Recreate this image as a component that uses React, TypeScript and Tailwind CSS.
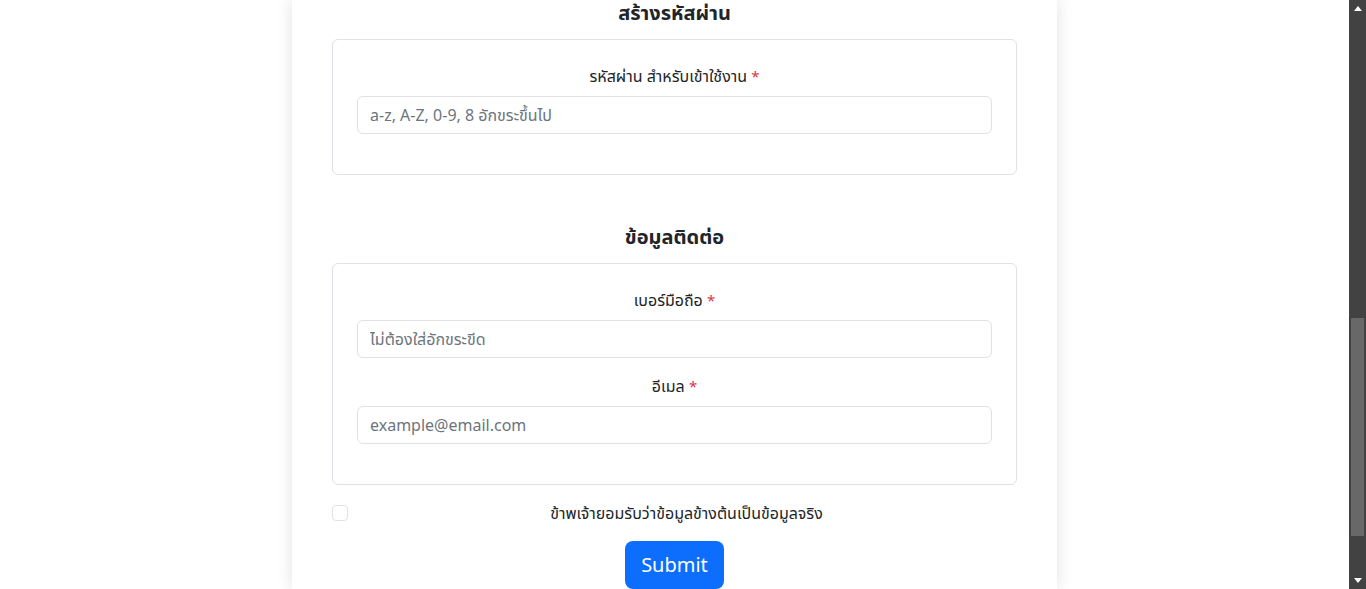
const font = "font-['Segoe_UI','Leelawadee_UI','Noto_Sans','Noto_Sans_Thai',sans-serif]";

function Field({ label, placeholder }: { label: string; placeholder: string }) {
  return (
    <div className="mb-4">
      <label className="mb-2 block text-center text-base leading-6 text-[#212529]">
        {label} <span className="text-[15px] text-[#dc3545]">*</span>
      </label>
      <input
        type="text"
        placeholder={placeholder}
        className="block h-[38px] w-full rounded-md border border-[#dee2e6] bg-white px-3 text-base text-[#212529] outline-none placeholder:text-[#6c757d]"
      />
    </div>
  );
}

function Scrollbar() {
  return (
    <div className="flex w-[17px] shrink-0 flex-col bg-[#424242]">
      <div className="flex h-[17px] items-center justify-center">
        <svg width="8" height="5" viewBox="0 0 8 5">
          <path d="M4 0 L8 5 L0 5 Z" fill="#ffffff" />
        </svg>
      </div>
      <div className="flex-1 px-[2px] pt-[301px]">
        <div className="h-[218px] bg-[#686868]" />
      </div>
      <div className="flex h-[17px] items-center justify-center">
        <svg width="8" height="5" viewBox="0 0 8 5">
          <path d="M0 0 L8 0 L4 5 Z" fill="#ffffff" />
        </svg>
      </div>
    </div>
  );
}

export default function App() {
  return (
    <div className={`flex h-[589px] overflow-hidden bg-white ${font}`}>
      <div className="flex flex-1 justify-center">
        <div className="w-[765px] bg-white px-10 shadow-[0_0_16px_rgba(0,0,0,0.12)]">
          <h5 className="mb-[14px] pt-[1px] text-center text-xl font-bold leading-6 text-[#212529]">สร้างรหัสผ่าน</h5>
          <div className="rounded-md border border-[#dee2e6] p-6">
            <Field label="รหัสผ่าน สำหรับเข้าใช้งาน" placeholder="a-z, A-Z, 0-9, 8 อักขระขึ้นไป" />
          </div>

          <h5 className="mt-[50px] mb-[14px] text-center text-xl font-bold leading-6 text-[#212529]">ข้อมูลติดต่อ</h5>
          <div className="rounded-md border border-[#dee2e6] p-6">
            <Field label="เบอร์มือถือ" placeholder="ไม่ต้องใส่อักขระขีด" />
            <Field label="อีเมล" placeholder="example@email.com" />
          </div>

          <div className="mt-4 flex items-start">
            <input
              type="checkbox"
              className="mt-1 h-4 w-4 shrink-0 appearance-none rounded border border-[#dee2e6] bg-white"
            />
            <label className="ml-2 flex-1 text-center text-base leading-6 text-[#212529]">
              ข้าพเจ้ายอมรับว่าข้อมูลข้างต้นเป็นข้อมูลจริง
            </label>
          </div>

          <div className="mt-4 flex justify-center">
            <button
              type="button"
              className="h-12 rounded-lg bg-[#0d6efd] px-4 text-xl leading-[30px] text-white"
            >
              Submit
            </button>
          </div>
        </div>
      </div>
      <Scrollbar />
    </div>
  );
}
